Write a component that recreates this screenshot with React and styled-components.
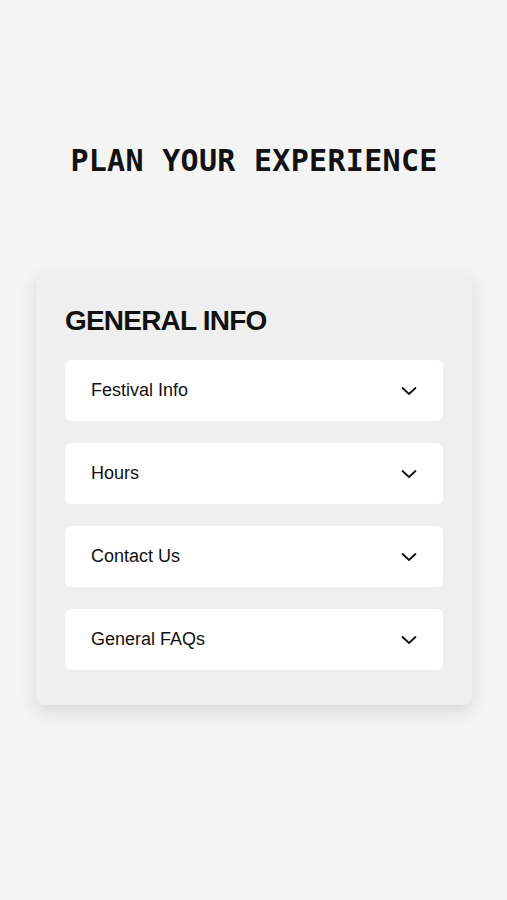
import styled, { createGlobalStyle } from 'styled-components';

const GlobalStyle = createGlobalStyle`
  html, body {
    margin: 0;
    padding: 0;
    background: #f4f4f4;
  }
  body {
    font-family: "Liberation Sans", Arial, sans-serif;
    color: #111;
  }
`;

const sections = ['Festival Info', 'Hours', 'Contact Us', 'General FAQs'];

function Chevron() {
  return (
    <svg width="16" height="10" viewBox="0 0 16 10" fill="none">
      <path d="M1.5 2 L8 8 L14.5 2" stroke="#111" strokeWidth="1.8" strokeLinecap="round" strokeLinejoin="round" />
    </svg>
  );
}

export default function App() {
  return (
    <>
      <GlobalStyle />
      <Page>
        <Title>PLAN YOUR EXPERIENCE</Title>
        <Card>
          <Heading>GENERAL INFO</Heading>
          <List>
            {sections.map((label) => (
              <Item key={label}>
                <ItemLabel>{label}</ItemLabel>
                <Chevron />
              </Item>
            ))}
          </List>
        </Card>
      </Page>
    </>
  );
}

const Page = styled.div`
  min-height: 900px;
  padding: 143px 35px 0 36px;
  box-sizing: border-box;
`;

const Title = styled.h1`
  margin: 0 0 95px;
  text-align: center;
  font-family: "DejaVu Sans Mono", "Liberation Mono", monospace;
  font-weight: 700;
  font-size: 30px;
  line-height: 36px;
  letter-spacing: 0.3px;
  color: #111;
`;

const Card = styled.section`
  background: #efefef;
  border-radius: 8px;
  padding: 30px 29px 35px;
  box-shadow: 0 6px 18px rgba(0, 0, 0, 0.12);
`;

const Heading = styled.h2`
  margin: 0 0 22px;
  font-weight: 700;
  font-size: 28px;
  line-height: 34px;
  letter-spacing: -0.8px;
  color: #111;
`;

const List = styled.div`
  display: flex;
  flex-direction: column;
  gap: 22px;
`;

const Item = styled.div`
  height: 61px;
  background: #fff;
  border-radius: 6px;
  display: flex;
  align-items: center;
  justify-content: space-between;
  padding: 0 26px;
  box-sizing: border-box;
`;

const ItemLabel = styled.span`
  font-size: 18px;
  color: #111;
`;
